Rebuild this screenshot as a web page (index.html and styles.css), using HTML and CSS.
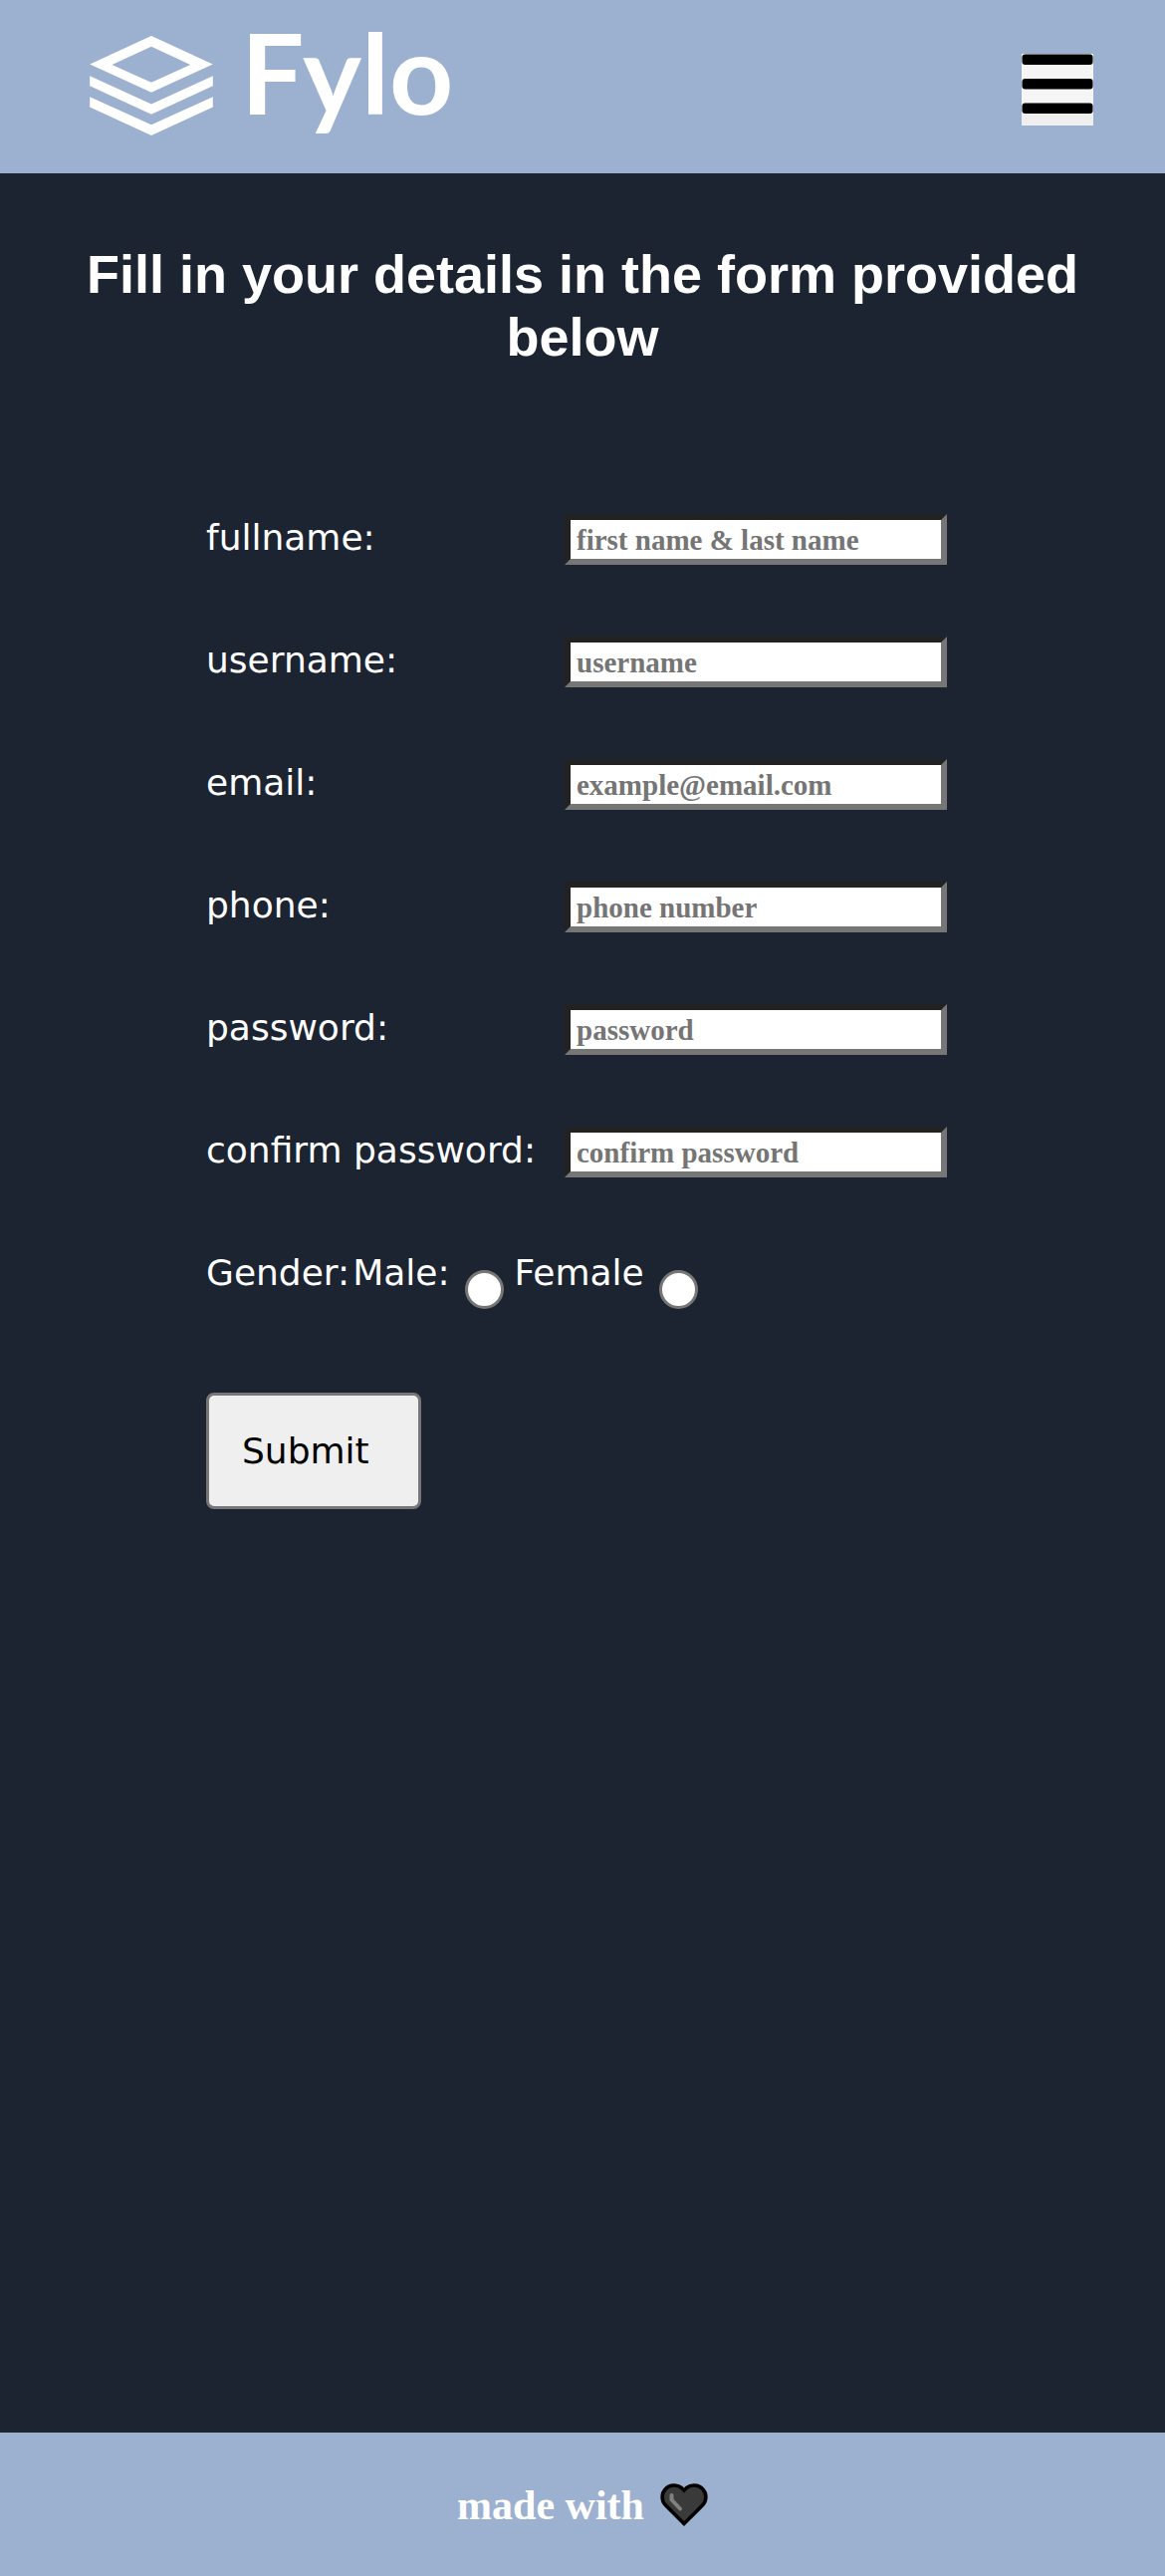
FILE: index.html
```html
<!DOCTYPE html>
<html lang="en">
<head>
  <meta charset="utf-8">
  <meta name="viewport" content="width=device-width, initial-scale=1">
  <title>Fylo</title>
  <link rel="stylesheet" href="styles.css">
</head>
<body>
  <header class="site-header">
    <a class="logo" href="#">
      <svg class="logo-mark" viewBox="0 0 372 301" aria-hidden="true">
        <path fill="#fff" fill-rule="evenodd" d="M186 0 372 86 186 171 0 86ZM186 32 67 87 186 141 304 87Z"/>
        <path fill="#fff" d="M0 121 186 206 372 121V151L186 237 0 151ZM0 184 186 269 372 184V215L186 301 0 215Z"/>
      </svg>
      <span class="logo-name">Fylo</span>
    </a>
    <button class="menu-button" type="button" aria-label="Menu">
      <svg viewBox="0 0 72 72" aria-hidden="true">
        <path fill="#f5f5f5" d="M0 0H72V60H0Z"/>
        <rect x="0.500" y="0.500" width="71" height="10.500" rx="3"/>
        <rect x="0.500" y="25" width="71" height="10.500" rx="3"/>
        <rect x="0.500" y="49.500" width="71" height="10.500" rx="3"/>
      </svg>
    </button>
  </header>

  <main class="content">
    <h1 class="title">Fill in your details in the form provided below</h1>
    <form class="form">
      <div class="field">
        <label for="fullname">fullname:</label>
        <input class="text-input" id="fullname" type="text" placeholder="first name &amp; last name">
      </div>
      <div class="field">
        <label for="username">username:</label>
        <input class="text-input" id="username" type="text" placeholder="username">
      </div>
      <div class="field">
        <label for="email">email:</label>
        <input class="text-input" id="email" type="email" placeholder="example@email.com">
      </div>
      <div class="field">
        <label for="phone">phone:</label>
        <input class="text-input" id="phone" type="tel" placeholder="phone number">
      </div>
      <div class="field">
        <label for="password">password:</label>
        <input class="text-input" id="password" type="password" placeholder="password">
      </div>
      <div class="field">
        <label for="confirm">confirm password:</label>
        <input class="text-input" id="confirm" type="password" placeholder="confirm password">
      </div>
      <div class="gender" role="radiogroup" aria-labelledby="gender-label">
        <span class="gender-label" id="gender-label">Gender:</span>
        <label for="male">Male:</label>
        <input class="radio" id="male" type="radio" name="gender">
        <label for="female">Female</label>
        <input class="radio" id="female" type="radio" name="gender">
      </div>
      <button class="submit" type="submit">Submit</button>
    </form>
  </main>

  <footer class="site-footer">
    <span>made with</span>
    <svg class="heart" viewBox="0 0 48 44" role="img" aria-label="love">
      <path fill="#3a3a3a" stroke="#000" stroke-width="3.600" d="M24 40.500 5.500 22C1 17.500 1 10 5.500 5.500S17 1 21.500 4.500L24 7 26.500 4.500C31 1 38 1 42.500 5.500S47 17.500 42.500 22Z"/>
      <path fill="none" stroke="#808080" stroke-width="4" stroke-linecap="round" stroke-linejoin="round" d="M11.500 12V16.500L20 25.500"/>
    </svg>
  </footer>
</body>
</html>
```
FILE: styles.css
```css
* {
  box-sizing: border-box;
}

body {
  display: flex;
  flex-direction: column;
  min-height: 100vh;
  margin: 0;
  background: hsl(217, 28%, 15%);
  color: #fff;
  font-family: Verdana, "DejaVu Sans", sans-serif;
  font-size: 36px;
  line-height: 42px;
}

.site-header {
  display: flex;
  justify-content: space-between;
  align-items: flex-start;
  padding: 0 72px 0 90px;
  height: 174px;
  background: #9cb0d0;
}

.logo {
  display: flex;
  align-items: flex-start;
  gap: 28px;
  color: #fff;
  text-decoration: none;
}

.logo-mark {
  width: 124px;
  height: 100px;
  margin-top: 36px;
}

.logo-name {
  font-family: Lato, sans-serif;
  font-weight: 700;
  font-size: 112px;
  line-height: 144px;
}

.menu-button {
  width: 72px;
  height: 72px;
  margin-top: 54px;
  padding: 0;
  border: 0;
  background: #efefef;
}

.menu-button svg {
  display: block;
  width: 100%;
}

.content {
  flex: 1;
  padding-top: 70px;
}

.title {
  margin: 0 72px 146px;
  font-family: "Liberation Sans", Arial, sans-serif;
  font-size: 54px;
  line-height: 63px;
  text-align: center;
}

.form {
  display: flex;
  flex-direction: column;
  align-items: flex-start;
  gap: 72px;
  padding: 0 72px 72px 207px;
}

.field {
  display: grid;
  grid-template-columns: 360px minmax(0, 384px);
  align-items: baseline;
  height: 51px;
}

.text-input {
  width: 100%;
  height: 51px;
  padding: 4px 6px 2px;
  border: 6px solid;
  border-color: #222 #767676 #767676 #222;
  border-radius: 0;
  background: #fff;
  color: #000;
  font: bold 29px "Liberation Serif", "Times New Roman", serif;
}

.text-input::placeholder {
  color: #757575;
  opacity: 1;
}

.gender {
  display: flex;
  align-items: flex-start;
  height: 60px;
  padding-top: 3px;
}

.gender-label {
  margin-right: 3px;
}

.radio {
  appearance: none;
  align-self: flex-end;
  width: 39px;
  height: 39px;
  margin: 0 11px 0 15px;
  border: 3px solid #767676;
  border-radius: 50%;
  background: #fff;
}

.radio:checked {
  box-shadow: inset 0 0 0 6px #fff;
  background: #0075ff;
}

.submit {
  height: 117px;
  margin-top: 12px;
  padding: 0 49px 0 33px;
  border: 3px solid #767676;
  border-radius: 8px;
  background: #efefef;
  color: #000;
  font: inherit;
}

.site-footer {
  display: flex;
  justify-content: center;
  align-items: center;
  gap: 16px;
  height: 144px;
  padding-top: 2px;
  background: #9cb0d0;
  font: bold 42px/48px "Liberation Serif", "Times New Roman", serif;
}

.heart {
  width: 48px;
  height: 44px;
}
```
